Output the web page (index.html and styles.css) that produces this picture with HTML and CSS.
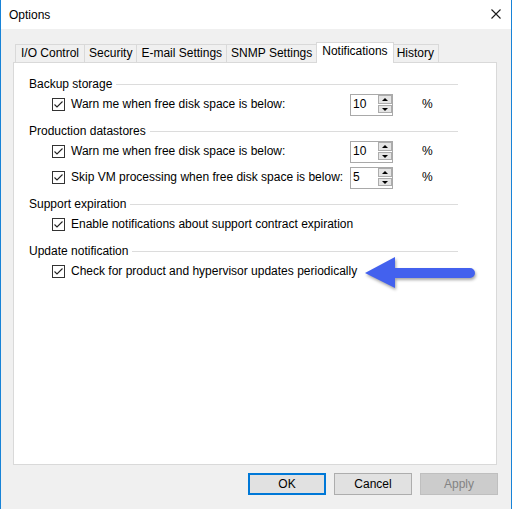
FILE: index.html
```html
<!DOCTYPE html>
<html>
<head>
<meta charset="utf-8">
<title>Options</title>
<link rel="stylesheet" href="styles.css">
</head>
<body>
<div class="window">
  <div class="titlebar">
    <span class="title">Options</span>
    <svg class="close" width="10" height="10" viewBox="0 0 10 10"><path d="M0.5 0.5 L9.5 9.5 M9.5 0.5 L0.5 9.5" stroke="#1a1a1a" stroke-width="1.1" fill="none"/></svg>
  </div>
  <div class="body">
    <div class="tabs">
      <div class="tab">I/O Control</div>
      <div class="tab">Security</div>
      <div class="tab">E-mail Settings</div>
      <div class="tab">SNMP Settings</div>
      <div class="tab active">Notifications</div>
      <div class="tab">History</div>
    </div>
    <div class="panel">
      <div class="group">
        <div class="group-head"><span>Backup storage</span><i class="rule"></i></div>
        <div class="row">
          <span class="check"><svg width="11" height="11" viewBox="0 0 11 11"><path d="M1.5 5.5 L4 8 L9.5 2.5" stroke="#222" stroke-width="1.1" fill="none"/></svg></span>
          <span class="label">Warn me when free disk space is below:</span>
          <div class="spin"><span class="spin-value">10</span><span class="spin-btns"><span class="spin-btn up"></span><span class="spin-btn down"></span></span></div>
          <span class="unit">%</span>
        </div>
      </div>
      <div class="group">
        <div class="group-head"><span>Production datastores</span><i class="rule"></i></div>
        <div class="row">
          <span class="check"><svg width="11" height="11" viewBox="0 0 11 11"><path d="M1.5 5.5 L4 8 L9.5 2.5" stroke="#222" stroke-width="1.1" fill="none"/></svg></span>
          <span class="label">Warn me when free disk space is below:</span>
          <div class="spin"><span class="spin-value">10</span><span class="spin-btns"><span class="spin-btn up"></span><span class="spin-btn down"></span></span></div>
          <span class="unit">%</span>
        </div>
        <div class="row">
          <span class="check"><svg width="11" height="11" viewBox="0 0 11 11"><path d="M1.5 5.5 L4 8 L9.5 2.5" stroke="#222" stroke-width="1.1" fill="none"/></svg></span>
          <span class="label">Skip VM processing when free disk space is below:</span>
          <div class="spin"><span class="spin-value">5</span><span class="spin-btns"><span class="spin-btn up"></span><span class="spin-btn down"></span></span></div>
          <span class="unit">%</span>
        </div>
      </div>
      <div class="group">
        <div class="group-head"><span>Support expiration</span><i class="rule"></i></div>
        <div class="row">
          <span class="check"><svg width="11" height="11" viewBox="0 0 11 11"><path d="M1.5 5.5 L4 8 L9.5 2.5" stroke="#222" stroke-width="1.1" fill="none"/></svg></span>
          <span class="label wide">Enable notifications about support contract expiration</span>
        </div>
      </div>
      <div class="group">
        <div class="group-head"><span>Update notification</span><i class="rule"></i></div>
        <div class="row">
          <span class="check"><svg width="11" height="11" viewBox="0 0 11 11"><path d="M1.5 5.5 L4 8 L9.5 2.5" stroke="#222" stroke-width="1.1" fill="none"/></svg></span>
          <span class="label wide">Check for product and hypervisor updates periodically</span>
        </div>
      </div>
      <svg class="arrow" width="124" height="46" viewBox="0 0 124 46">
        <path d="M5 23 L35 7 L35 18 L110 18 A5 5 0 0 1 110 28 L35 28 L35 38 Z" fill="#4361ee"/>
      </svg>
    </div>
    <div class="buttons">
      <button class="btn default">OK</button>
      <button class="btn">Cancel</button>
      <button class="btn" disabled>Apply</button>
    </div>
  </div>
</div>
</body>
</html>
```
FILE: styles.css
```css
* { box-sizing: border-box; }

html, body {
  margin: 0;
  padding: 0;
  background: #f0f0f0;
}

body {
  font-family: "Segoe UI", "Liberation Sans", Arial, sans-serif;
  font-size: 12px;
  color: #000;
}

.window {
  width: 512px;
  height: 509px;
  border-left: 1px solid #1883d7;
  border-right: 1px solid #1883d7;
  background: #f0f0f0;
  display: flex;
  flex-direction: column;
}

/* title bar */
.titlebar {
  height: 29px;
  background: #fff;
  display: flex;
  align-items: center;
  padding: 0 10px 0 8px;
}
.title { flex: 1; }
.close { display: block; margin-top: -1px; }

/* dialog body */
.body {
  flex: 1;
  padding: 13px 14px 0 12px;
}

/* tab strip */
.tabs {
  display: flex;
  align-items: flex-end;
  height: 20px;
  padding-left: 2px;
}
.tab {
  height: 18px;
  line-height: 17px;
  padding: 0 4px;
  border: 1px solid #d9d9d9;
  border-bottom: none;
  background: #f0f0f0;
  margin-left: -1px;
  white-space: nowrap;
}
.tab:first-child { margin-left: 0; padding: 0 5px; }
.tab.active {
  height: 21px;
  line-height: 17px;
  margin-bottom: -1px;
  background: #fff;
  position: relative;
  z-index: 1;
  padding: 0 5px;
  margin-right: -1px;
}

/* tab page */
.panel {
  position: relative;
  height: 403px;
  background: #fff;
  border: 1px solid #d9d9d9;
  padding: 11px 38px 0 15px;
}

.group + .group { margin-top: 5px; }

.group-head {
  height: 20px;
  display: flex;
  align-items: center;
}
.rule {
  flex: 1;
  height: 1px;
  background: #dcdcdc;
  margin-left: 4px;
}

.row {
  height: 22px;
  display: flex;
  align-items: center;
  padding-left: 23px;
}
.row + .row { margin-top: 4px; }

.check {
  width: 13px;
  height: 13px;
  border: 1px solid #333;
  display: flex;
  align-items: center;
  justify-content: center;
  margin-top: -1px;
}
.check svg { display: block; }

.label {
  margin-left: 6px;
  width: 279px;
  white-space: nowrap;
  margin-top: -2px;
}
.label.wide { width: auto; }

/* numeric up-down */
.spin {
  width: 43px;
  height: 22px;
  border: 1px solid #a9a9a9;
  display: flex;
  align-items: stretch;
  padding: 0 0 2px 2px;
}
.spin-value {
  flex: 1;
  line-height: 19px;
}
.spin-btns {
  width: 14px;
  display: flex;
  flex-direction: column;
  gap: 1px;
}
.spin-btn {
  flex: 1;
  background: #e5e5e5;
  border: 1px solid #acacac;
  position: relative;
}
.spin-btn::after {
  content: "";
  position: absolute;
  left: 3px;
  top: 2px;
  border-left: 3px solid transparent;
  border-right: 3px solid transparent;
}
.spin-btn.up::after { border-bottom: 3px solid #000; }
.spin-btn.down::after { border-top: 3px solid #000; }

.unit { margin-left: 29px; margin-top: -2px; }

/* pointer arrow drawn over the page */
.arrow {
  position: absolute;
  left: 346px;
  top: 187px;
  filter: drop-shadow(1px 2px 1.5px rgba(0, 0, 0, 0.35));
}

/* dialog buttons */
.buttons {
  display: flex;
  justify-content: flex-end;
  gap: 8px;
  margin-top: 8px;
  margin-right: -1px;
}
.btn {
  width: 78px;
  height: 22px;
  font: inherit;
  color: #000;
  background: #e1e1e1;
  border: 1px solid #adadad;
  padding: 0;
}
.btn.default { border: 2px solid #0078d7; }
.btn:disabled {
  background: #cccccc;
  border-color: #bfbfbf;
  color: #838383;
}
```
